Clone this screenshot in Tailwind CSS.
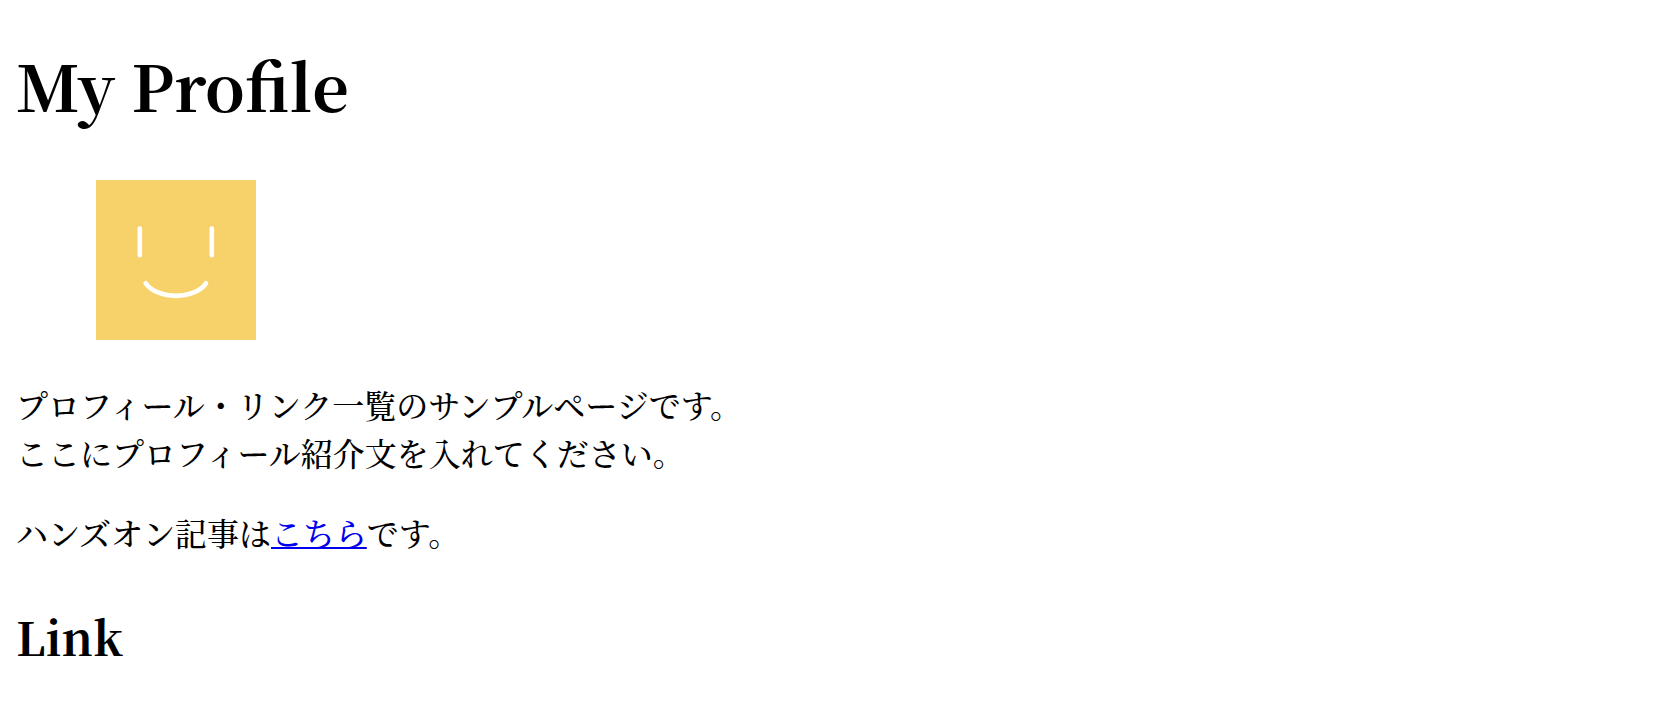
<!DOCTYPE html>
<html lang="ja">
<head>
  <meta charset="UTF-8" />
  <meta name="viewport" content="width=device-width,initial-scale=1" />
  <title>My Profile</title>
  <script src="https://cdn.jsdelivr.net/npm/@tailwindcss/browser@4"></script>
</head>
<body class="bg-white text-black text-[32px] leading-[48px] font-medium p-4 font-['Noto_Serif_CJK_JP','Noto_Sans_CJK_JP',serif]">
  <h1 class="mt-6 text-[64px] leading-[88px] font-bold">My Profile</h1>

  <figure class="mt-13 mx-20">
    <svg class="size-40" viewBox="0 0 160 160" role="img" aria-label="Smiling face">
      <rect width="160" height="160" fill="#f7d26b" />
      <g fill="none" stroke="#fff" stroke-width="4.6" stroke-linecap="round">
        <path d="M43.8 48.5V75.2M115.8 48.5V75.2" />
        <path d="M49.7 103.3C62 120 98 120 110 103.3" />
      </g>
    </svg>
  </figure>

  <p class="mt-10">
    プロフィール・リンク一覧のサンプルページです。<br />
    ここにプロフィール紹介文を入れてください。
  </p>
  <p class="mt-8">ハンズオン記事は<a href="#" class="text-[#0000ee] underline decoration-2">こちら</a>です。</p>

  <h2 class="mt-11 text-[46px] leading-[72px] font-bold">Link</h2>
</body>
</html>
